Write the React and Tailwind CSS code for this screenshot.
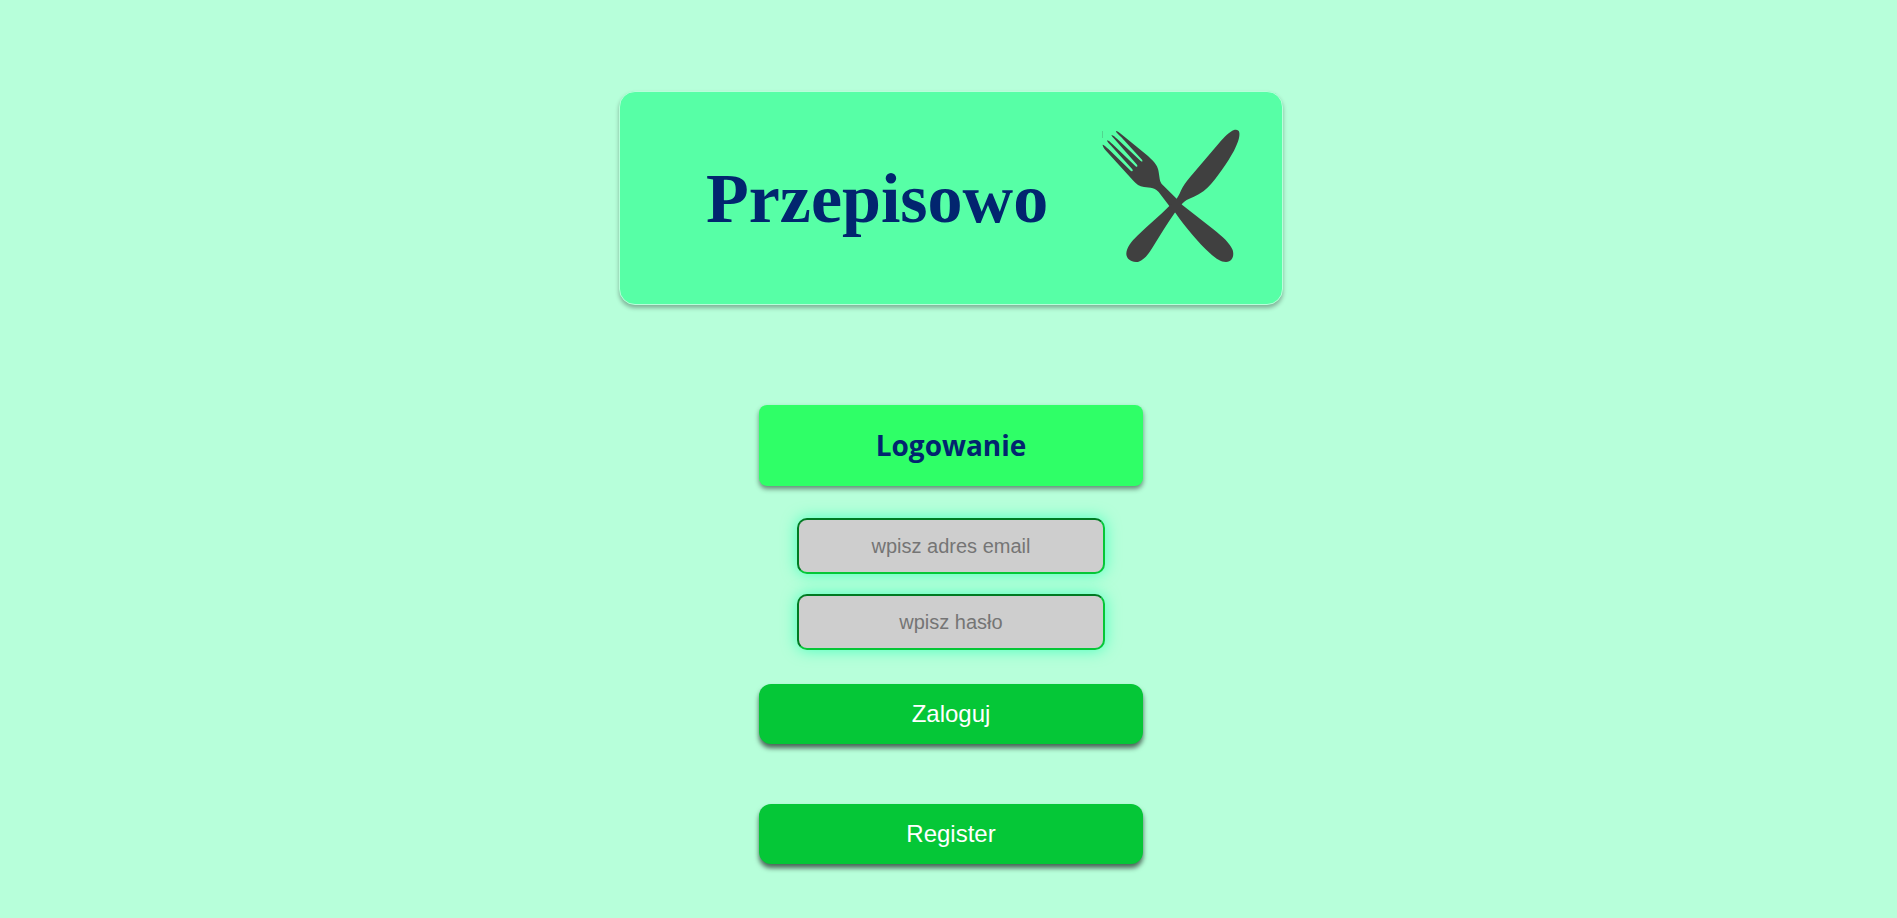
function Cutlery() {
  return (
    <svg viewBox="66 57 414 402" className="h-[134px] w-[138px] shrink-0 fill-[#404040]" role="img" aria-label="Widelec i nóż">
      <path d="M108 63 C112 63 118 68 126 74 L204 138 C226 158 234 170 236 186 L239 206 C240 214 242 218 249 226 L290 266 L306 284 L400 358 C428 380 450 400 458 420 C463 436 458 455 438 456 C422 456 408 446 390 430 C354 396 318 354 286 308 L268 288 L236 246 C228 237 221 234 212 233 L192 231 C178 229 169 222 160 212 L76 120 C70 112 67 106 68 104 C71 103 78 110 86 118 L152 182 C157 186 160 183 157 178 L92 106 C84 98 80 93 82 91 C86 91 92 98 98 103 L166 168 C171 173 174 170 171 164 L106 90 C98 82 93 77 95 75 C99 75 106 82 112 87 L182 153 C187 157 189 154 186 149 L124 82 C114 72 107 66 108 63 Z" />
      <path d="M478 68 C480 82 472 102 462 122 C442 158 412 202 384 232 C366 250 346 259 328 266 C316 271 310 276 304 284 L286 306 C262 340 242 374 219 410 C206 432 192 450 176 455 C154 459 138 446 139 430 C140 412 154 394 172 377 C204 347 240 316 268 288 L290 266 C298 256 300 246 308 232 C316 218 328 204 340 190 L418 98 C434 80 448 66 462 60 C470 58 477 60 478 68 Z" />
      <path d="M67 63 h1.6 v21 h-1.6 Z" className="opacity-40" />
    </svg>
  );
}

const inputClass =
  "h-14 w-full rounded-[10px] border-2 border-t-[#007a22] border-r-[#05c737] border-b-[#05c737] border-l-[#007a22] bg-[#cecece] px-4 text-center text-xl text-[#222222] placeholder:text-[#757575] shadow-[0_0_15px_rgba(0,255,170,0.6)] outline-none";

const buttonClass =
  "h-[60px] w-full cursor-pointer rounded-xl bg-[#05c737] text-2xl text-white shadow-[0_4px_5px_rgba(0,0,0,0.6)]";

export default function App() {
  return (
    <main className="flex min-h-screen flex-col items-center bg-[#b7ffda] pt-[91px] pb-[54px] pl-[5px] font-['Liberation_Sans',Arial,sans-serif]">
      <header className="flex w-full max-w-[664px] items-start justify-between rounded-2xl border border-[#b7ffda] bg-[#57ffa6] pt-[37px] pr-[42px] pb-[41px] pl-[86px] shadow-[0_3px_4px_rgba(0,0,0,0.3)]">
        <h1 className="pt-[34px] font-['Liberation_Serif',serif] text-[70px] leading-[72px] font-bold text-[#02256f]">
          Przepisowo
        </h1>
        <Cutlery />
      </header>

      <form className="mt-[100px] flex w-full max-w-96 flex-col items-center" onSubmit={(e) => e.preventDefault()}>
        <h2 className="w-full rounded-lg bg-[#2fff67] py-5 text-center font-['Open_Sans',sans-serif] text-[28px] leading-[41px] font-bold text-[#02256f] shadow-[0_3px_5px_rgba(0,0,0,0.45)]">
          Logowanie
        </h2>
        <div className="mt-8 flex w-full max-w-[308px] flex-col gap-5">
          <input type="email" aria-label="Adres email" placeholder="wpisz adres email" className={inputClass} />
          <input type="password" aria-label="Hasło" placeholder="wpisz hasło" className={inputClass} />
        </div>
        <div className="mt-[34px] flex w-full flex-col gap-[60px]">
          <button type="submit" className={buttonClass}>Zaloguj</button>
          <button type="button" className={buttonClass}>Register</button>
        </div>
      </form>
    </main>
  );
}
